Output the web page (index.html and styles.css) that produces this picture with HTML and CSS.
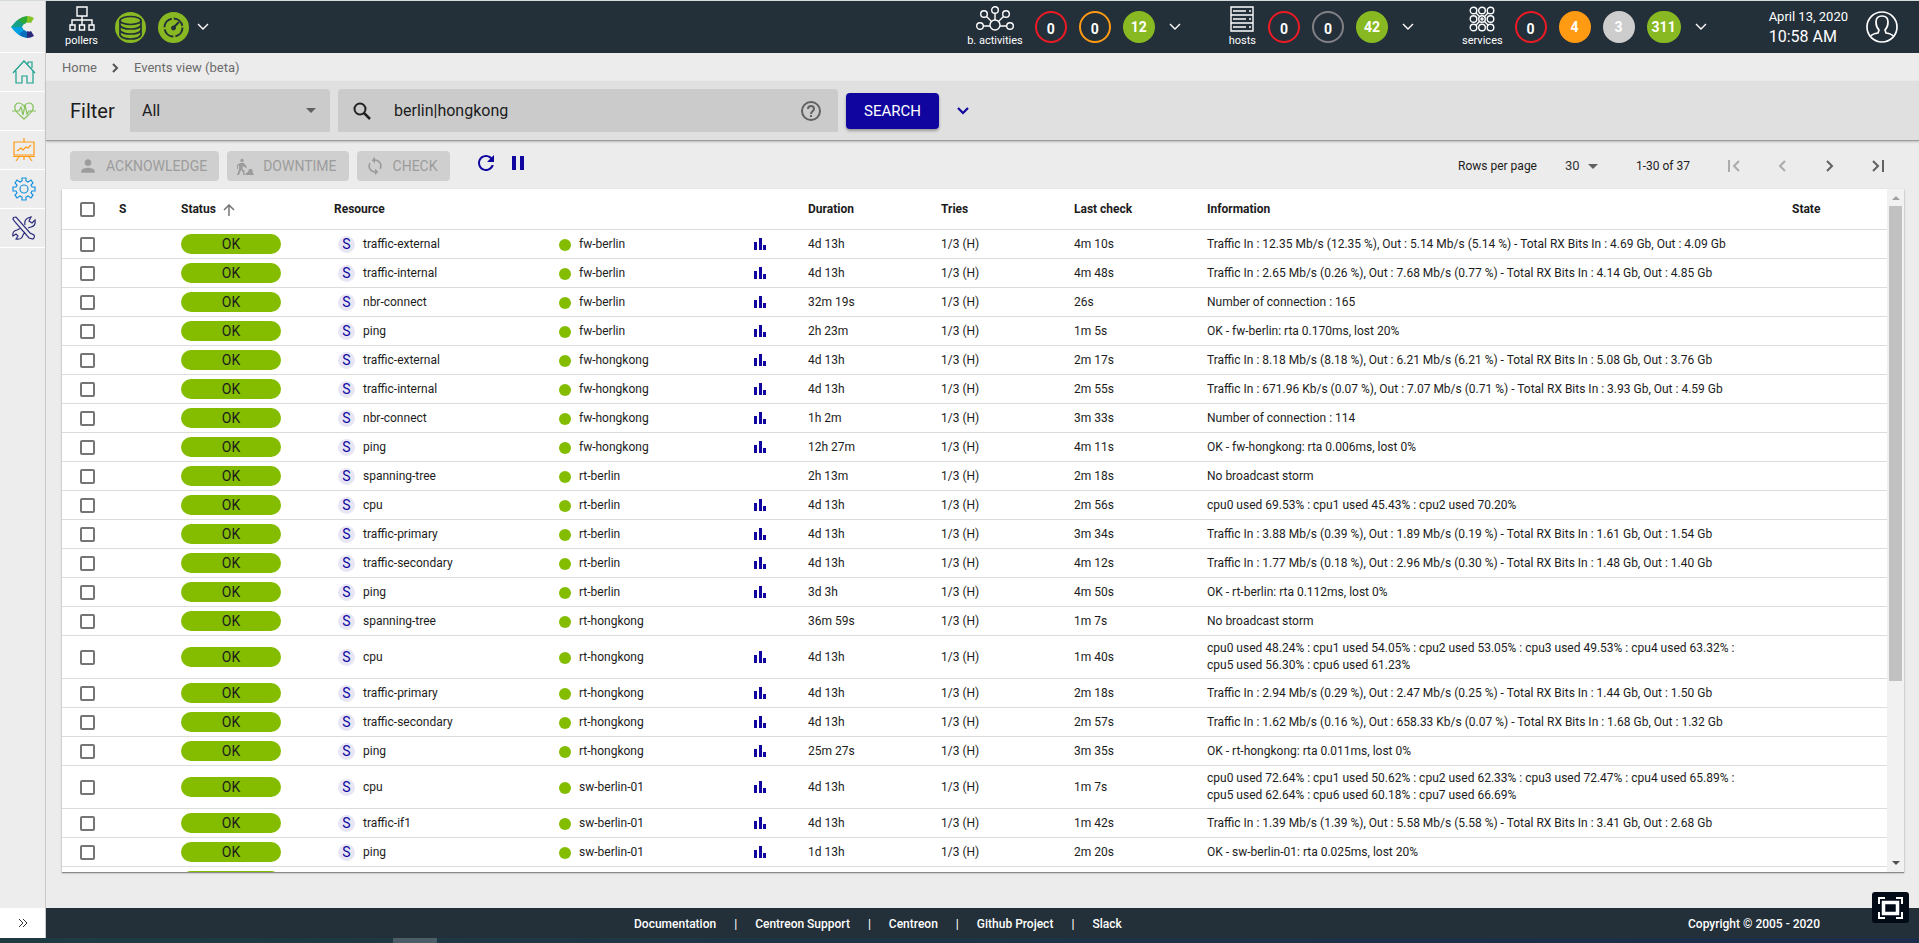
FILE: index.html
```html
<!DOCTYPE html>
<html lang="en">
<head>
<meta charset="utf-8">
<title>Events view</title>
<link rel="stylesheet" href="styles.css">
</head>
<body>
<svg class="defs" aria-hidden="true">
  <symbol id="down" viewBox="0 0 12 8"><path d="M1 1l5 5 5-5" fill="none" stroke="currentColor" stroke-width="1.4"/></symbol>
  <symbol id="bars" viewBox="0 0 12 12"><path d="M0 4h3v8H0zM5 0h3v12H5zM9 7h3v5H9z" fill="currentColor"/></symbol>
  <symbol id="caret" viewBox="0 0 10 5"><path d="M0 0h10L5 5z" fill="currentColor"/></symbol>
</svg>
<div class="app">
  <nav class="side">
    <a class="logo" href="#" aria-label="Centreon">
      <svg width="24" height="22" viewBox="0 0 24 22"><path d="M0 11Q6 3 12 1l3 6q-3 1-4 4z" fill="#16a085"/><path d="M0 11Q6 19 12 21l3-6q-3-1-4-4z" fill="#00a0e3"/><path d="M7 4q5-4 10-4l1 6q-3 0-5 2z" fill="#2ea836"/><path d="M16 0q4 0 7 2l-3 5q-2-1-4 0z" fill="#85c226"/><path d="M8 18q4 4 9 4l1-6q-3 0-5-2z" fill="#0a6ebd"/><path d="M16 22q4 0 7-2l-3-5q-2 1-4 0z" fill="#2b2a7c"/></svg>
    </a>
    <a class="nav-item home" href="#" aria-label="Home">
      <svg width="24" height="24" viewBox="0 0 24 24"><path d="M1 13L12 1l11 12M4 11v12h6v-7h5v7h6V11M16 4V2h4v6"/></svg>
    </a>
    <a class="nav-item monitoring" href="#" aria-label="Monitoring">
      <svg width="24" height="18" viewBox="0 0 24 18"><path d="M4 9C1 4 4 1 7 1c3 0 4 2 5 3 1-1 2-3 5-3s6 3 3 8c-2 3-6 6-8 8-2-2-6-5-8-8zM0 9h7l2-4 2 8 2-10 2 9 2-3h7"/></svg>
    </a>
    <a class="nav-item reporting" href="#" aria-label="Reporting">
      <svg width="22" height="24" viewBox="0 0 22 24"><path d="M1 4h20v13H1zM11 0v4M0 18.500h22M6 19l-3 4M16 19l3 4M11 19v3M4 13l4-3 2 2 3-3 2 1 3-3"/></svg>
    </a>
    <a class="nav-item config" href="#" aria-label="Configuration">
      <svg width="24" height="24" viewBox="0 0 24 24"><circle cx="12" cy="12" r="4"/><path d="M10 1h4v3l2 1 3-2 2 3-2 2 1 2h3v4h-3l-1 2 2 2-2 3-3-2-2 1v3h-4v-3l-2-1-3 2-2-3 2-2-1-2H1v-4h3l1-2-2-2 2-3 3 2 2-1z"/></svg>
    </a>
    <a class="nav-item admin" href="#" aria-label="Administration">
      <svg width="24" height="24" viewBox="0 0 24 24"><path d="M1 3q0-2 3-2l14 16 4 2q1 3-1 4l-4-1L3 6zM13 9q-1-5 3-7l3-1-2 4 3 2 3-3q1 6-4 7l-3 1M9 12l-4 2q-5 1-4 6l3-2 2 2-2 3q6 1 7-4l2-3"/></svg>
    </a>
    <span class="grow"></span>
    <button class="expand" aria-label="Expand menu"><svg width="10" height="10" viewBox="0 0 10 10"><path d="M1 1l4 4-4 4M5 1l4 4-4 4" fill="none" stroke="currentColor"/></svg></button>
  </nav>
  <div class="content">
    <header class="topbar">
      <div class="kind">
        <svg width="26" height="26" viewBox="0 0 26 26"><path d="M8 1h10v9H8zM13 10v9M3 19v-5h20v5M1 19h5v5H1zM10.500 19h5v5h-5zM20 19h5v5h-5z"/></svg>
        <span>pollers</span>
      </div>
      <svg class="db" width="31" height="31" viewBox="0 0 31 31"><circle cx="15.500" cy="15.500" r="15.500" fill="#88b922"/><g fill="none" stroke="#232f39" stroke-width="1.700"><ellipse cx="15.500" cy="8.500" rx="10.500" ry="4"/><path d="M5 8.500v5q2 3.500 10.500 3.500T26 13.500v-5M5 14v4.500q2 3.500 10.500 3.500T26 18.500V14M5 19v4q2 4 10.500 4T26 23v-4"/></g></svg>
      <svg class="gauge" width="31" height="31" viewBox="0 0 31 31"><circle cx="15.500" cy="15.500" r="15.500" fill="#88b922"/><g fill="none" stroke="#232f39"><circle cx="15.500" cy="15.500" r="9" stroke-width="2" stroke-dasharray="12 2.140"/><circle cx="15.500" cy="16" r="2" fill="#232f39"/><path d="M16 15l5-5" stroke-width="2"/></g></svg>
      <button class="toggle" aria-label="Poller details"><svg width="12" height="8"><use href="#down"/></svg></button>
      <span class="grow"></span>
      <div class="group">
        <div class="kind">
          <svg width="38" height="26" viewBox="0 0 38 26"><circle cx="19" cy="19" r="5"/><circle cx="19" cy="4" r="3.300"/><circle cx="8" cy="8" r="3.300"/><circle cx="30" cy="8" r="3.300"/><circle cx="4" cy="20" r="3.300"/><circle cx="34" cy="20" r="3.300"/><path d="M19 7.500V14M10.500 10.500l5 5M27.500 10.500l-5 5M7.500 20H14M24 20h6.500"/></svg>
          <span>b. activities</span>
        </div>
        <a class="count red" href="#">0</a><a class="count orange" href="#">0</a><a class="count ok" href="#">12</a>
        <button class="toggle" aria-label="Activity details"><svg width="12" height="8"><use href="#down"/></svg></button>
      </div>
      <div class="group">
        <div class="kind">
          <svg width="24" height="26" viewBox="0 0 24 26"><path d="M1 1h22v24H1zM1 9h22M1 17h22M3 5h13M19 5h2M3 13h13M19 13h2M3 21h13M19 21h2"/></svg>
          <span>hosts</span>
        </div>
        <a class="count red" href="#">0</a><a class="count gray" href="#">0</a><a class="count ok" href="#">42</a>
        <button class="toggle" aria-label="Host details"><svg width="12" height="8"><use href="#down"/></svg></button>
      </div>
      <div class="group">
        <div class="kind">
          <svg width="26" height="26" viewBox="0 0 26 26"><circle cx="4.500" cy="4.500" r="3.300"/><circle cx="13" cy="4.500" r="3.300"/><circle cx="21.500" cy="4.500" r="3.300"/><circle cx="4.500" cy="13" r="3.300"/><circle cx="13" cy="13" r="3.300"/><circle cx="21.500" cy="13" r="3.300"/><circle cx="4.500" cy="21.500" r="3.300"/><circle cx="13" cy="21.500" r="3.300"/><circle cx="21.500" cy="21.500" r="3.300"/><circle cx="13" cy="13" r="1"/><path d="M7 7l4 4M19 7l-4 4M7 19l4-4M19 19l-4-4"/></svg>
          <span>services</span>
        </div>
        <a class="count red" href="#">0</a><a class="count warn" href="#">4</a><a class="count unknown" href="#">3</a><a class="count ok wide" href="#">311</a>
        <button class="toggle" aria-label="Service details"><svg width="12" height="8"><use href="#down"/></svg></button>
      </div>
      <div class="clock"><span>April 13, 2020</span><span class="time">10:58 AM</span></div>
      <button class="user" aria-label="Profile"><svg width="32" height="32" viewBox="0 0 32 32" fill="none" stroke="#fff" stroke-width="1.700"><circle cx="16" cy="16" r="15"/><path d="M5 25q1-2 7-3l1-3q-3-3-3-8 0-6 6-6t6 6q0 5-3 8l1 3q6 1 7 3"/></svg></button>
    </header>

    <nav class="crumbs"><a href="#">Home</a><svg width="7" height="10" viewBox="0 0 7 10"><path d="M1 1l4 4-4 4" fill="none" stroke="#555" stroke-width="2"/></svg><a href="#">Events view (beta)</a></nav>

    <form class="filter">
      <label class="filter-label" for="filter">Filter</label>
      <div class="field picker"><select id="filter"><option>All</option></select><svg width="10" height="5"><use href="#caret"/></svg></div>
      <div class="field query">
        <svg width="18" height="18" viewBox="0 0 18 18" fill="none" stroke="#222"><circle cx="7" cy="7" r="5.500" stroke-width="2"/><path d="M11 11l6 6" stroke-width="2.500"/></svg>
        <input type="text" aria-label="Search" value="berlin|hongkong" autofocus>
        <svg width="20" height="20" viewBox="0 0 20 20" fill="none" stroke="#616161" stroke-width="2"><circle cx="10" cy="10" r="9"/><path d="M7 8q0-3 3-3t3 3q0 1-1.500 2.200T10 13M10 14v2"/></svg>
      </div>
      <button class="search" type="button">SEARCH</button>
      <button class="more" type="button" aria-label="Advanced filters"><svg width="12" height="8" viewBox="0 0 12 8"><path d="M1 1l5 5 5-5" fill="none" stroke="currentColor" stroke-width="2.200"/></svg></button>
    </form>

    <div class="actions">
      <button class="action" disabled><svg width="20" height="20" viewBox="0 0 24 24" fill="currentColor"><path d="M12 12c2.200 0 4-1.800 4-4s-1.800-4-4-4-4 1.800-4 4 1.800 4 4 4zm0 2c-2.700 0-8 1.300-8 4v2h16v-2c0-2.700-5.300-4-8-4z"/></svg>ACKNOWLEDGE</button>
      <button class="action" disabled><svg width="20" height="20" viewBox="0 0 20 20" fill="currentColor"><circle cx="7" cy="4.500" r="1.700"/><path d="M5 7l4 0 3 4-1 1-3-2-.5 3 2 2v4H8v-3l-2-2-2 5H2l2-6V9l-1 1v3H2V9zM10 19h9l-1-2-1-4h-3l-1 3-2 1z"/></svg>DOWNTIME</button>
      <button class="action" disabled><svg width="20" height="20" viewBox="0 0 24 24" fill="currentColor"><path d="M12 4V1L8 5l4 4V6c3.310 0 6 2.690 6 6 0 1.010-.25 1.970-.7 2.800l1.460 1.460C19.540 15.030 20 13.570 20 12c0-4.420-3.580-8-8-8zm0 14c-3.310 0-6-2.690-6-6 0-1.010.25-1.970.7-2.800L5.240 7.740C4.460 8.970 4 10.430 4 12c0 4.420 3.580 8 8 8v3l4-4-4-4v3z"/></svg>CHECK</button>
      <div class="refreshers">
        <button class="plain" aria-label="Refresh"><svg width="24" height="24" viewBox="0 0 24 24" fill="currentColor"><path d="M17.650 6.350C16.200 4.900 14.210 4 12 4c-4.420 0-7.990 3.580-7.990 8s3.570 8 7.990 8c3.730 0 6.840-2.550 7.730-6h-2.080c-.82 2.330-3.040 4-5.650 4-3.310 0-6-2.690-6-6s2.690-6 6-6c1.660 0 3.140.69 4.220 1.780L13 11h7V4l-2.350 2.350z"/></svg></button>
        <button class="plain" aria-label="Pause"><svg width="12" height="14" viewBox="0 0 12 14" fill="currentColor"><path d="M0 0h4v14H0zM8 0h4v14H8z"/></svg></button>
      </div>
      <span class="grow"></span>
      <div class="pager">
        <label for="rows">Rows per page</label>
        <span class="rows"><select id="rows"><option>30</option></select><svg width="10" height="5"><use href="#caret"/></svg></span>
        <span class="range">1-30 of 37</span>
        <button class="plain" disabled aria-label="First page"><svg width="12" height="12" viewBox="0 0 12 12"><path d="M1 0v12M11 1L6 6l5 5"/></svg></button>
        <button class="plain" disabled aria-label="Previous page"><svg width="12" height="12" viewBox="0 0 12 12"><path d="M9 1L4 6l5 5"/></svg></button>
        <button class="plain" aria-label="Next page"><svg width="12" height="12" viewBox="0 0 12 12"><path d="M3 1l5 5-5 5"/></svg></button>
        <button class="plain" aria-label="Last page"><svg width="12" height="12" viewBox="0 0 12 12"><path d="M11 0v12M1 1l5 5-5 5"/></svg></button>
      </div>
    </div>

    <main class="panel">
      <div class="viewport">
      <table>
        <colgroup><col class="c-check"><col class="c-sev"><col class="c-status"><col class="c-res"><col class="c-host"><col class="c-graph"><col class="c-time"><col class="c-time"><col class="c-time"><col><col class="c-state"></colgroup>
        <thead><tr><th><input type="checkbox" aria-label="Select all"></th><th>S</th><th>Status <svg width="12" height="12" viewBox="0 0 12 12"><path d="M6 12V1M1 6l5-5 5 5" fill="none" stroke="#757575" stroke-width="1.500"/></svg></th><th>Resource</th><th></th><th></th><th>Duration</th><th>Tries</th><th>Last check</th><th>Information</th><th>State</th></tr></thead>
        <tbody>
        <tr><td><input type="checkbox" aria-label="Select"></td><td></td><td><span class="ok-chip">OK</span></td><td><i class="svc">S</i>traffic-external</td><td><i class="dot"></i>fw-berlin</td><td><svg class="graph"><use href="#bars"/></svg></td><td>4d 13h</td><td>1/3 (H)</td><td>4m 10s</td><td>Traffic In : 12.35 Mb/s (12.35 %), Out : 5.14 Mb/s (5.14 %) - Total RX Bits In : 4.69 Gb, Out : 4.09 Gb</td><td></td></tr>
        <tr><td><input type="checkbox" aria-label="Select"></td><td></td><td><span class="ok-chip">OK</span></td><td><i class="svc">S</i>traffic-internal</td><td><i class="dot"></i>fw-berlin</td><td><svg class="graph"><use href="#bars"/></svg></td><td>4d 13h</td><td>1/3 (H)</td><td>4m 48s</td><td>Traffic In : 2.65 Mb/s (0.26 %), Out : 7.68 Mb/s (0.77 %) - Total RX Bits In : 4.14 Gb, Out : 4.85 Gb</td><td></td></tr>
        <tr><td><input type="checkbox" aria-label="Select"></td><td></td><td><span class="ok-chip">OK</span></td><td><i class="svc">S</i>nbr-connect</td><td><i class="dot"></i>fw-berlin</td><td><svg class="graph"><use href="#bars"/></svg></td><td>32m 19s</td><td>1/3 (H)</td><td>26s</td><td>Number of connection : 165</td><td></td></tr>
        <tr><td><input type="checkbox" aria-label="Select"></td><td></td><td><span class="ok-chip">OK</span></td><td><i class="svc">S</i>ping</td><td><i class="dot"></i>fw-berlin</td><td><svg class="graph"><use href="#bars"/></svg></td><td>2h 23m</td><td>1/3 (H)</td><td>1m 5s</td><td>OK - fw-berlin: rta 0.170ms, lost 20%</td><td></td></tr>
        <tr><td><input type="checkbox" aria-label="Select"></td><td></td><td><span class="ok-chip">OK</span></td><td><i class="svc">S</i>traffic-external</td><td><i class="dot"></i>fw-hongkong</td><td><svg class="graph"><use href="#bars"/></svg></td><td>4d 13h</td><td>1/3 (H)</td><td>2m 17s</td><td>Traffic In : 8.18 Mb/s (8.18 %), Out : 6.21 Mb/s (6.21 %) - Total RX Bits In : 5.08 Gb, Out : 3.76 Gb</td><td></td></tr>
        <tr><td><input type="checkbox" aria-label="Select"></td><td></td><td><span class="ok-chip">OK</span></td><td><i class="svc">S</i>traffic-internal</td><td><i class="dot"></i>fw-hongkong</td><td><svg class="graph"><use href="#bars"/></svg></td><td>4d 13h</td><td>1/3 (H)</td><td>2m 55s</td><td>Traffic In : 671.96 Kb/s (0.07 %), Out : 7.07 Mb/s (0.71 %) - Total RX Bits In : 3.93 Gb, Out : 4.59 Gb</td><td></td></tr>
        <tr><td><input type="checkbox" aria-label="Select"></td><td></td><td><span class="ok-chip">OK</span></td><td><i class="svc">S</i>nbr-connect</td><td><i class="dot"></i>fw-hongkong</td><td><svg class="graph"><use href="#bars"/></svg></td><td>1h 2m</td><td>1/3 (H)</td><td>3m 33s</td><td>Number of connection : 114</td><td></td></tr>
        <tr><td><input type="checkbox" aria-label="Select"></td><td></td><td><span class="ok-chip">OK</span></td><td><i class="svc">S</i>ping</td><td><i class="dot"></i>fw-hongkong</td><td><svg class="graph"><use href="#bars"/></svg></td><td>12h 27m</td><td>1/3 (H)</td><td>4m 11s</td><td>OK - fw-hongkong: rta 0.006ms, lost 0%</td><td></td></tr>
        <tr><td><input type="checkbox" aria-label="Select"></td><td></td><td><span class="ok-chip">OK</span></td><td><i class="svc">S</i>spanning-tree</td><td><i class="dot"></i>rt-berlin</td><td></td><td>2h 13m</td><td>1/3 (H)</td><td>2m 18s</td><td>No broadcast storm</td><td></td></tr>
        <tr><td><input type="checkbox" aria-label="Select"></td><td></td><td><span class="ok-chip">OK</span></td><td><i class="svc">S</i>cpu</td><td><i class="dot"></i>rt-berlin</td><td><svg class="graph"><use href="#bars"/></svg></td><td>4d 13h</td><td>1/3 (H)</td><td>2m 56s</td><td>cpu0 used 69.53% : cpu1 used 45.43% : cpu2 used 70.20%</td><td></td></tr>
        <tr><td><input type="checkbox" aria-label="Select"></td><td></td><td><span class="ok-chip">OK</span></td><td><i class="svc">S</i>traffic-primary</td><td><i class="dot"></i>rt-berlin</td><td><svg class="graph"><use href="#bars"/></svg></td><td>4d 13h</td><td>1/3 (H)</td><td>3m 34s</td><td>Traffic In : 3.88 Mb/s (0.39 %), Out : 1.89 Mb/s (0.19 %) - Total RX Bits In : 1.61 Gb, Out : 1.54 Gb</td><td></td></tr>
        <tr><td><input type="checkbox" aria-label="Select"></td><td></td><td><span class="ok-chip">OK</span></td><td><i class="svc">S</i>traffic-secondary</td><td><i class="dot"></i>rt-berlin</td><td><svg class="graph"><use href="#bars"/></svg></td><td>4d 13h</td><td>1/3 (H)</td><td>4m 12s</td><td>Traffic In : 1.77 Mb/s (0.18 %), Out : 2.96 Mb/s (0.30 %) - Total RX Bits In : 1.48 Gb, Out : 1.40 Gb</td><td></td></tr>
        <tr><td><input type="checkbox" aria-label="Select"></td><td></td><td><span class="ok-chip">OK</span></td><td><i class="svc">S</i>ping</td><td><i class="dot"></i>rt-berlin</td><td><svg class="graph"><use href="#bars"/></svg></td><td>3d 3h</td><td>1/3 (H)</td><td>4m 50s</td><td>OK - rt-berlin: rta 0.112ms, lost 0%</td><td></td></tr>
        <tr><td><input type="checkbox" aria-label="Select"></td><td></td><td><span class="ok-chip">OK</span></td><td><i class="svc">S</i>spanning-tree</td><td><i class="dot"></i>rt-hongkong</td><td></td><td>36m 59s</td><td>1/3 (H)</td><td>1m 7s</td><td>No broadcast storm</td><td></td></tr>
        <tr><td><input type="checkbox" aria-label="Select"></td><td></td><td><span class="ok-chip">OK</span></td><td><i class="svc">S</i>cpu</td><td><i class="dot"></i>rt-hongkong</td><td><svg class="graph"><use href="#bars"/></svg></td><td>4d 13h</td><td>1/3 (H)</td><td>1m 40s</td><td>cpu0 used 48.24% : cpu1 used 54.05% : cpu2 used 53.05% : cpu3 used 49.53% : cpu4 used 63.32% : cpu5 used 56.30% : cpu6 used 61.23%</td><td></td></tr>
        <tr><td><input type="checkbox" aria-label="Select"></td><td></td><td><span class="ok-chip">OK</span></td><td><i class="svc">S</i>traffic-primary</td><td><i class="dot"></i>rt-hongkong</td><td><svg class="graph"><use href="#bars"/></svg></td><td>4d 13h</td><td>1/3 (H)</td><td>2m 18s</td><td>Traffic In : 2.94 Mb/s (0.29 %), Out : 2.47 Mb/s (0.25 %) - Total RX Bits In : 1.44 Gb, Out : 1.50 Gb</td><td></td></tr>
        <tr><td><input type="checkbox" aria-label="Select"></td><td></td><td><span class="ok-chip">OK</span></td><td><i class="svc">S</i>traffic-secondary</td><td><i class="dot"></i>rt-hongkong</td><td><svg class="graph"><use href="#bars"/></svg></td><td>4d 13h</td><td>1/3 (H)</td><td>2m 57s</td><td>Traffic In : 1.62 Mb/s (0.16 %), Out : 658.33 Kb/s (0.07 %) - Total RX Bits In : 1.68 Gb, Out : 1.32 Gb</td><td></td></tr>
        <tr><td><input type="checkbox" aria-label="Select"></td><td></td><td><span class="ok-chip">OK</span></td><td><i class="svc">S</i>ping</td><td><i class="dot"></i>rt-hongkong</td><td><svg class="graph"><use href="#bars"/></svg></td><td>25m 27s</td><td>1/3 (H)</td><td>3m 35s</td><td>OK - rt-hongkong: rta 0.011ms, lost 0%</td><td></td></tr>
        <tr><td><input type="checkbox" aria-label="Select"></td><td></td><td><span class="ok-chip">OK</span></td><td><i class="svc">S</i>cpu</td><td><i class="dot"></i>sw-berlin-01</td><td><svg class="graph"><use href="#bars"/></svg></td><td>4d 13h</td><td>1/3 (H)</td><td>1m 7s</td><td>cpu0 used 72.64% : cpu1 used 50.62% : cpu2 used 62.33% : cpu3 used 72.47% : cpu4 used 65.89% : cpu5 used 62.64% : cpu6 used 60.18% : cpu7 used 66.69%</td><td></td></tr>
        <tr><td><input type="checkbox" aria-label="Select"></td><td></td><td><span class="ok-chip">OK</span></td><td><i class="svc">S</i>traffic-if1</td><td><i class="dot"></i>sw-berlin-01</td><td><svg class="graph"><use href="#bars"/></svg></td><td>4d 13h</td><td>1/3 (H)</td><td>1m 42s</td><td>Traffic In : 1.39 Mb/s (1.39 %), Out : 5.58 Mb/s (5.58 %) - Total RX Bits In : 3.41 Gb, Out : 2.68 Gb</td><td></td></tr>
        <tr><td><input type="checkbox" aria-label="Select"></td><td></td><td><span class="ok-chip">OK</span></td><td><i class="svc">S</i>ping</td><td><i class="dot"></i>sw-berlin-01</td><td><svg class="graph"><use href="#bars"/></svg></td><td>1d 13h</td><td>1/3 (H)</td><td>2m 20s</td><td>OK - sw-berlin-01: rta 0.025ms, lost 20%</td><td></td></tr>
        <tr><td></td><td></td><td><span class="ok-chip"></span></td><td></td><td></td><td></td><td></td><td></td><td></td><td></td><td></td></tr>
        </tbody>
      </table>
      </div>
      <div class="scroll"><svg width="8" height="4" viewBox="0 0 8 4"><path d="M0 4l4-4 4 4z" fill="#a0a0a0"/></svg><span class="thumb"></span><svg width="8" height="4" viewBox="0 0 8 4"><path d="M0 0h8L4 4z" fill="#505050"/></svg></div>
    </main>

    <footer class="footer">
      <div class="links"><a href="#">Documentation</a><span>|</span><a href="#">Centreon Support</a><span>|</span><a href="#">Centreon</a><span>|</span><a href="#">Github Project</a><span>|</span><a href="#">Slack</a></div>
      <span class="copyright">Copyright © 2005 - 2020</span>
      <button class="full" aria-label="Full screen"><svg width="25" height="22" viewBox="0 0 25 22" fill="none" stroke="#fff"><path d="M1 7V1h6M18 1h6v6M24 15v6h-6M7 21H1v-6" stroke-width="2"/><path d="M5.500 5.500h14v11h-14z" stroke-width="3.500"/></svg></button>
    </footer>
  </div>
</div>
<div class="desktop"><span></span></div>
</body>
</html>
```
FILE: styles.css
```css
* { box-sizing: border-box; }
body {
  margin: 0;
  height: 100vh;
  display: flex;
  flex-direction: column;
  overflow: hidden;
  border-top: 1px solid #d5dbdd;
  background: #ececec;
  color: #1c1c1c;
  font: 12px/14px Roboto, "Liberation Sans", sans-serif;
}
a { color: inherit; text-decoration: none; }
button { border: 0; padding: 0; background: none; color: inherit; font: inherit; display: flex; align-items: center; justify-content: center; }
select, input { font: inherit; color: inherit; }
svg { flex: none; }
.defs { position: absolute; width: 0; height: 0; }
.grow { flex: 1; }
.app { flex: 1; min-height: 0; display: flex; }

/* Side menu */
.side { width: 46px; display: flex; flex-direction: column; border-right: 1px solid #c8c8c8; background: #ededed; }
.logo { height: 52px; display: flex; align-items: center; justify-content: center; border-bottom: 1px solid #fff; }
.nav-item { height: 39px; padding-left: 2px; display: flex; align-items: center; justify-content: center; border-bottom: 1px solid #fff; }
.nav-item svg { fill: none; stroke: currentColor; stroke-width: 1.2; }
.home { color: #1aa08e; }
.monitoring { color: #85c25a; }
.reporting { color: #ff9913; }
.config { color: #1691de; }
.admin { color: #2b2a7c; }
.expand { height: 30px; background: #fff; color: #333; }

.content { flex: 1; min-width: 0; display: flex; flex-direction: column; }

/* Top bar */
.topbar { height: 52px; padding: 0 21px 0 19px; display: flex; align-items: center; background: #232f39; color: #fff; }
.kind { height: 42px; display: flex; flex-direction: column; align-items: center; gap: 2px; font-size: 11px; }
.kind svg { fill: none; stroke: #fff; stroke-width: 1.4; }
.db { margin-left: 17px; }
.gauge { margin: 0 6px 0 12px; }
.group { display: flex; align-items: center; gap: 12px; margin-right: 48px; }
.count { width: 32px; height: 32px; border-radius: 16px; border: 2px solid; display: flex; align-items: center; justify-content: center; font-size: 14px; font-weight: 700; }
.red { border-color: #ed1c24; padding-top: 3px; }
.orange { border-color: #ff9a13; padding-top: 3px; }
.gray { border-color: #818185; padding-top: 3px; }
.ok { border-color: #88b922; background: #88b922; }
.warn { border-color: #ff9a13; background: #ff9a13; }
.unknown { border-color: #cdcdcd; background: #cdcdcd; }
.wide { width: 34px; }
.toggle { margin-left: 2px; }
.clock { display: flex; flex-direction: column; margin: 0 18px 0 14px; font-size: 13px; line-height: 20px; }
.time { font-size: 16px; }

.crumbs { height: 28px; padding: 2px 16px 0; display: flex; align-items: center; gap: 15px; color: #6b6b6b; font-size: 13px; }

/* Filter bar */
.filter { height: 60px; padding: 0 24px; display: flex; align-items: center; gap: 8px; background: #e0e0e0; border-bottom: 1px solid #9c9c9c; box-shadow: 0 1px 2px #bbb; }
.filter-label { width: 52px; font-size: 20px; line-height: 24px; }
.field { height: 43px; display: flex; align-items: center; background: #cbcbcb; border-radius: 4px 4px 0 0; font-size: 16px; }
.picker { width: 200px; padding-right: 14px; color: #616161; }
.picker select { flex: 1; height: 43px; padding: 0 12px; border: 0; background: none; appearance: none; color: #1c1c1c; }
.query { width: 500px; padding: 0 17px 0 15px; }
.query input { flex: 1; height: 43px; border: 0; outline: 0; padding: 0 0 0 23px; background: none; }
.search { height: 36px; padding: 0 18px; border-radius: 4px; background: #10069f; color: #fff; font-size: 15px; box-shadow: 0 2px 3px #999; }
.more { margin-left: 10px; color: #10069f; }

/* Toolbar above the table */
.actions { height: 48px; padding: 2px 17px 0 24px; display: flex; align-items: center; gap: 8px; }
.action { height: 30px; padding: 0 12px 0 8px; gap: 8px; border-radius: 4px; background: #cfcfcf; color: #9c9c9c; font-size: 14px; }
.plain { color: #10069f; }
.refreshers { height: 30px; margin-left: 16px; display: flex; align-items: flex-start; gap: 14px; }
.refreshers .plain { height: 24px; }
.pager { display: flex; align-items: center; }
.pager .plain { width: 48px; height: 24px; color: #616161; }
.pager .plain:disabled { color: #ababab; }
.pager .plain svg { fill: none; stroke: currentColor; stroke-width: 2; }
.rows { margin: 0 38px 0 28px; display: flex; align-items: center; gap: 8px; color: #616161; }
.rows select { border: 0; padding: 0; background: none; appearance: none; color: #333; font-size: 13px; }
.range { margin-right: 20px; }

/* Resource table */
.panel { flex: 1; min-height: 0; margin: 0 15px 36px 16px; display: flex; background: #fff; box-shadow: 0 1px 1px #8a8a8a, 0 1px 3px #ccc; }
.viewport { flex: 1; min-width: 0; overflow: hidden; }
table { width: 100%; table-layout: fixed; border-spacing: 0; }
.c-check { width: 57px; }
.c-sev { width: 62px; }
.c-status { width: 153px; }
.c-res { width: 225px; }
.c-host { width: 195px; }
.c-graph { width: 54px; }
.c-time { width: 133px; }
.c-state { width: 95px; }
th, td { padding: 0 16px 0 0; text-align: left; vertical-align: middle; border-bottom: 1px solid #dcdcdc; }
th { height: 41px; font-weight: 700; }
th svg { margin-left: 4px; vertical-align: middle; }
td { height: 29px; }
td:nth-child(10) { padding: 4px 32px 4px 0; line-height: 17px; }
th:first-child, td:first-child { padding-left: 18px; }
td:nth-child(3) { padding-right: 0; }
td:nth-child(4) { padding-left: 4px; }
input[type="checkbox"] { appearance: none; display: block; width: 15px; height: 15px; margin: 0; border: 2px solid #757575; border-radius: 2px; }
.ok-chip { display: block; width: 100px; height: 20px; border-radius: 10px; background: #84bd00; text-align: center; font-size: 14px; line-height: 20px; }
.svc { display: inline-block; width: 17px; height: 17px; margin-right: 8px; border-radius: 50%; background: #e7e6f5; color: #10069f; font-style: normal; font-size: 14px; line-height: 17px; text-align: center; vertical-align: middle; }
.dot { display: inline-block; width: 12px; height: 12px; margin-right: 8px; border-radius: 50%; background: #84bd00; vertical-align: middle; }
.graph { display: block; width: 12px; height: 12px; color: #10069f; }
.scroll { width: 17px; padding: 7px 0; display: flex; flex-direction: column; align-items: center; background: #f1f1f1; }
.thumb { width: 13px; flex: 0 0 71%; margin: 6px 0 auto; background: #c1c1c1; }

/* Footer */
.footer { position: relative; height: 30px; padding: 2px 99px 0 588px; display: flex; align-items: center; justify-content: space-between; background: #232f39; color: #fff; font-weight: 500; }
.links { display: flex; gap: 18px; }
.full { position: absolute; right: 10px; bottom: 15px; width: 37px; height: 31px; border-radius: 3px; background: #020a18; }
.desktop { height: 5px; padding-left: 393px; display: flex; background: linear-gradient(90deg, #1f3b42, #1c2c4a); }
.desktop span { width: 44px; background: #4d5d68; }
```
